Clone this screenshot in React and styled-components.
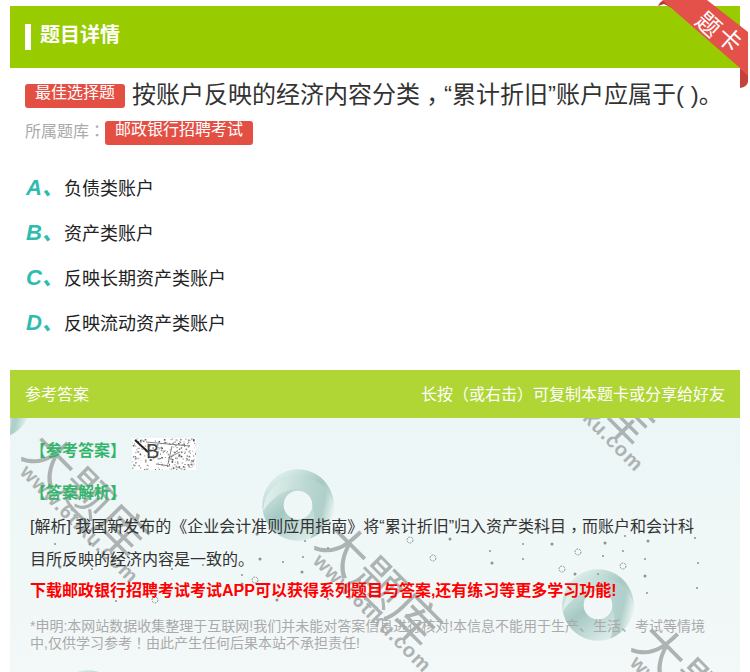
import React from 'react'
import styled, { createGlobalStyle } from 'styled-components'

const GlobalStyle = createGlobalStyle`
    html, body {
        margin: 0;
        padding: 0;
        background: #fff;
    }
    body {
        font-family: "Liberation Sans", "Noto Sans CJK SC", sans-serif;
    }
`

const Page = styled.div`
    position: relative;
    width: 750px;
    height: 672px;
    overflow: hidden;
    padding: 6px 10px 0;
    box-sizing: border-box;
`

const Banner = styled.div`
    height: 62px;
    background: #99cc00;
    display: flex;
    align-items: center;
    padding-left: 15px;
    gap: 9px;
`

const BannerMark = styled.span`
    width: 6px;
    height: 26px;
    background: #fff;
`

const BannerTitle = styled.h1`
    margin: 0 0 4px;
    font-size: 20px;
    line-height: 28px;
    font-weight: 700;
    color: #fff;
`

const Ribbon = styled.svg`
    position: absolute;
    top: 0;
    right: 0;
    width: 100px;
    height: 95px;
`

const Question = styled.div`
    padding: 9px 15px 0;
    display: flex;
    align-items: center;
    gap: 7px;
`

const Tag = styled.span`
    display: inline-block;
    flex: none;
    height: 24px;
    margin-top: ${p => p.$drop || 0}px;
    padding: 0 10px;
    border-radius: 3px;
    background: #e44f44;
    color: #fff;
    font-size: 16px;
    line-height: 18px;
`

const QuestionText = styled.div`
    font-size: 24px;
    line-height: 36px;
    color: #333;
    white-space: nowrap;
`

// the centred full-width marks of the original come from the TC cut of the font
const Punct = styled.span`
    font-family: "Noto Sans CJK TC", sans-serif;
    line-height: 0;
    vertical-align: ${p => (p.$low ? '-0.28em' : 'baseline')};
`

const Source = styled.div`
    padding: 7px 15px 0;
    display: flex;
    align-items: center;
    height: 26px;
    font-size: 16px;
    color: #aaa;
`

const SourceLabel = styled.span`
    margin-top: -6px;
`

const OptionList = styled.ul`
    list-style: none;
    margin: 0;
    padding: 18px 16px 0;
`

const Option = styled.li`
    display: flex;
    align-items: center;
    height: 45px;
`

const OptionKey = styled.span`
    width: 38px;
    margin-bottom: 4px;
    font-size: 22px;
    font-style: italic;
    font-weight: 700;
    color: #2fbcb0;
`

const OptionText = styled.span`
    font-size: 18px;
    color: #222;
`

const AnswerBar = styled.div`
    margin-top: 26px;
    height: 48px;
    box-sizing: border-box;
    padding: 0 15px 3px;
    background: #afd634;
    color: #fff;
    font-size: 16px;
    display: flex;
    align-items: center;
    justify-content: space-between;
`

const AnswerPanel = styled.div`
    position: relative;
    height: 254px;
    overflow: hidden;
    background: linear-gradient(#ecf6f6, #f3f8f8);
`

const Decor = styled.div`
    position: absolute;
    inset: 0;
`

const Watermark = styled.div`
    position: absolute;
    left: ${p => p.$x}px;
    top: ${p => p.$y}px;
    transform: rotate(45deg);
    transform-origin: left top;
    color: #adb2b2;
    white-space: nowrap;
`

const WatermarkTitle = styled.div`
    font-size: 50px;
    line-height: 50px;
`

const WatermarkSite = styled.div`
    font-size: 20px;
    line-height: 22px;
    font-weight: 700;
    letter-spacing: 1px;
    margin: -12px 0 0 12px;
`

const Swirl = styled.svg`
    position: absolute;
    left: ${p => p.$x}px;
    top: ${p => p.$y}px;
    width: 76px;
    height: 76px;
`

const Speckles = styled.svg`
    position: absolute;
    left: 0;
    top: 0;
    width: 730px;
    height: 254px;
`

const AnswerBody = styled.div`
    position: relative;
    padding: 15px 32px 0 20px;
`

const AnswerRow = styled.div`
    display: flex;
    align-items: center;
    height: 36px;
    gap: 2px;
`

const GreenLabel = styled.div`
    font-size: 16px;
    line-height: 24px;
    font-weight: 700;
    color: #35b56c;
`

const AnalysisLabel = styled(GreenLabel)`
    margin-top: 12px;
`

const AnswerImage = styled.div`
    position: relative;
    width: 64px;
    height: 32px;
    flex: none;
    margin: 6px 0 0 4px;
`

const NoiseSvg = styled.svg`
    position: absolute;
    inset: 0;
    width: 64px;
    height: 32px;
`

const AnswerLetter = styled.span`
    position: absolute;
    left: 14px;
    top: 0;
    font-size: 20px;
    line-height: 26px;
    color: #444;
`

const Analysis = styled.p`
    margin: 5px 0 0;
    font-size: 16px;
    line-height: 33px;
    color: #333;
`

const Promo = styled.p`
    margin: 0;
    font-size: 16px;
    line-height: 30px;
    font-weight: 700;
    color: #f00;
    white-space: nowrap;
`

const Notice = styled.p`
    margin: 12px 0 0;
    font-size: 14px;
    line-height: 17px;
    color: #aaa;
`

const options = [
    ['A、', '负债类账户'],
    ['B、', '资产类账户'],
    ['C、', '反映长期资产类账户'],
    ['D、', '反映流动资产类账户'],
]

const watermarks = [
    { x: 40, y: 7 },
    { x: 333, y: 96 },
    { x: 545, y: -105 },
    { x: 650, y: 198 },
]

const swirls = [
    { x: -53, y: -53 },
    { x: 250, y: 49 },
    { x: 550, y: 149 },
    { x: 40, y: 250 },
]

// solid dots and little hollow bubbles scattered behind the text, panel coordinates
const dots = [
    [247, 122], [295, 129], [318, 136], [250, 147], [273, 150], [293, 145], [292, 160], [232, 163],
    [245, 168], [232, 172], [106, 189], [145, 188], [50, 155], [82, 157], [162, 157], [80, 132],
    [45, 132], [193, 153], [267, 188], [318, 187], [400, 127], [440, 127], [480, 139], [513, 132],
    [542, 132], [568, 139], [593, 144], [595, 131], [613, 139], [615, 124], [638, 129], [685, 126],
    [423, 145], [482, 151], [513, 147], [552, 157], [565, 162], [613, 154], [635, 147], [635, 164],
    [637, 181], [687, 176], [465, 181], [588, 162], [688, 151],
]
const bubbles = [[400, 128], [423, 146], [552, 157], [613, 154], [568, 140], [145, 188], [245, 168]]

const noise = []
let seed = 7
const rand = () => {
    seed = (seed * 16807) % 2147483647
    return seed / 2147483647
}
for (let i = 0; i < 260; i++) {
    noise.push([rand() * 64, rand() * 32, rand() < 0.3 ? 1.6 : 1, rand() * 0.6 + 0.25])
}

const SwirlMark = ({ x, y, id }) => (
    <Swirl $x={x} $y={y} viewBox="0 0 100 100">
        <defs>
            <linearGradient id={`${id}-a`} x1="0" y1="0.3" x2="1" y2="0.5">
                <stop offset="0" stopColor="#e2f2ee" />
                <stop offset="0.6" stopColor="#b9d6d1" />
                <stop offset="0.85" stopColor="#b0cfca" />
                <stop offset="1" stopColor="#e4f3f0" />
            </linearGradient>
            <linearGradient id={`${id}-b`} x1="0.1" y1="0.1" x2="0.8" y2="1">
                <stop offset="0" stopColor="#e2f2ee" />
                <stop offset="0.45" stopColor="#a5c8c3" />
                <stop offset="1" stopColor="#e8f5f2" />
            </linearGradient>
        </defs>
        <path fill={`url(#${id}-b)`} fillRule="evenodd" d="M50 3 A47 47 0 1 1 49.9 3 Z M50 31 A19 19 0 1 0 50.1 31 Z" />
        <path fill={`url(#${id}-a)`} d="M4 58 A47 47 0 0 1 97 50 A47 47 0 0 1 66 94 C74 80 72 62 69 50 A19 19 0 0 0 62 35 C45 22 20 34 4 58 Z" />
    </Swirl>
)

const App = () => (
    <>
        <GlobalStyle />
        <Page>
            <Banner>
                <BannerMark />
                <BannerTitle>题目详情</BannerTitle>
            </Banner>
            <Question>
                <Tag $drop={2}>最佳选择题</Tag>
                <QuestionText>按账户反映的经济内容分类<Punct $low>，</Punct>“累计折旧”账户应属于( )。</QuestionText>
            </Question>
            <Source>
                <SourceLabel>所属题库<Punct>：</Punct></SourceLabel>
                <Tag>邮政银行招聘考试</Tag>
            </Source>
            <OptionList>
                {options.map(([key, text]) => (
                    <Option key={key}>
                        <OptionKey>{key}</OptionKey>
                        <OptionText>{text}</OptionText>
                    </Option>
                ))}
            </OptionList>
            <AnswerBar>
                <span>参考答案</span>
                <span>长按<Punct>（</Punct>或右击<Punct>）</Punct>可复制本题卡或分享给好友</span>
            </AnswerBar>
            <AnswerPanel>
                <Decor>
                    {swirls.map((s, i) => <SwirlMark key={i} id={`swirl-${i}`} x={s.x} y={s.y} />)}
                    {watermarks.map((w, i) => (
                        <Watermark key={i} $x={w.x} $y={w.y}>
                            <WatermarkTitle>大题库</WatermarkTitle>
                            <WatermarkSite>www.6tiku.com</WatermarkSite>
                        </Watermark>
                    ))}
                    <Speckles viewBox="0 6 730 254">
                        {dots.map(([cx, cy], i) => <circle key={i} cx={cx} cy={cy} r={i % 3 ? 1 : 1.5} fill="#8a9494" />)}
                        {bubbles.map(([cx, cy], i) => <circle key={i} cx={cx} cy={cy} r="3" fill="#f2f8f8" stroke="#8a9494" strokeDasharray="2 1" />)}
                    </Speckles>
                </Decor>
                <AnswerBody>
                    <AnswerRow>
                        <GreenLabel>【参考答案】</GreenLabel>
                        <AnswerImage>
                            <NoiseSvg viewBox="0 0 64 32">
                                <rect width="64" height="32" fill="#fff" />
                                {noise.map(([nx, ny, size, alpha], i) => <rect key={i} x={nx} y={ny} width={size} height={size} fill="#333" opacity={alpha} />)}
                                <path d="M3 2 L16 14" stroke="#222" strokeWidth="2" />
                                <path d="M14 4 L58 8 M40 8 L36 26 M36 20 L48 14 M24 26 L38 28" stroke="#666" strokeWidth="0.8" fill="none" />
                            </NoiseSvg>
                            <AnswerLetter>B</AnswerLetter>
                        </AnswerImage>
                    </AnswerRow>
                    <AnalysisLabel>【答案解析】</AnalysisLabel>
                    <Analysis>[解析] 我国新发布的《企业会计准则应用指南》将“累计折旧”归入资产类科目<Punct $low>，</Punct>而账户和会计科目所反映的经济内容是一致的。</Analysis>
                    <Promo>下载邮政银行招聘考试考试APP可以获得系列题目与答案,还有练习等更多学习功能!</Promo>
                    <Notice>*申明:本网站数据收集整理于互联网!我们并未能对答案信息进行核对!本信息不能用于生产、生活、考试等情境中,仅供学习参考<Punct>！</Punct>由此产生任何后果本站不承担责任!</Notice>
                </AnswerBody>
            </AnswerPanel>
            <Ribbon viewBox="0 0 100 95">
                <path d="M8 6 Q10 1 15 0 L22 8 L14 4 Z" fill="#b93a32" />
                <path d="M90 68 L98 74 L98 82 Q97 87 90 88 Z" fill="#c5423a" />
                <path d="M12 0 L57 0 L98 32 L98 76 L90 68 Z" fill="#e4514a" />
                <text x="57" y="26" fontSize="24" fill="#fff" textAnchor="middle" dominantBaseline="middle" transform="rotate(42 57 26)">题</text>
                <text x="78" y="41" fontSize="24" fill="#fff" textAnchor="middle" dominantBaseline="middle" transform="rotate(42 78 41)">卡</text>
            </Ribbon>
        </Page>
    </>
)

export default App
